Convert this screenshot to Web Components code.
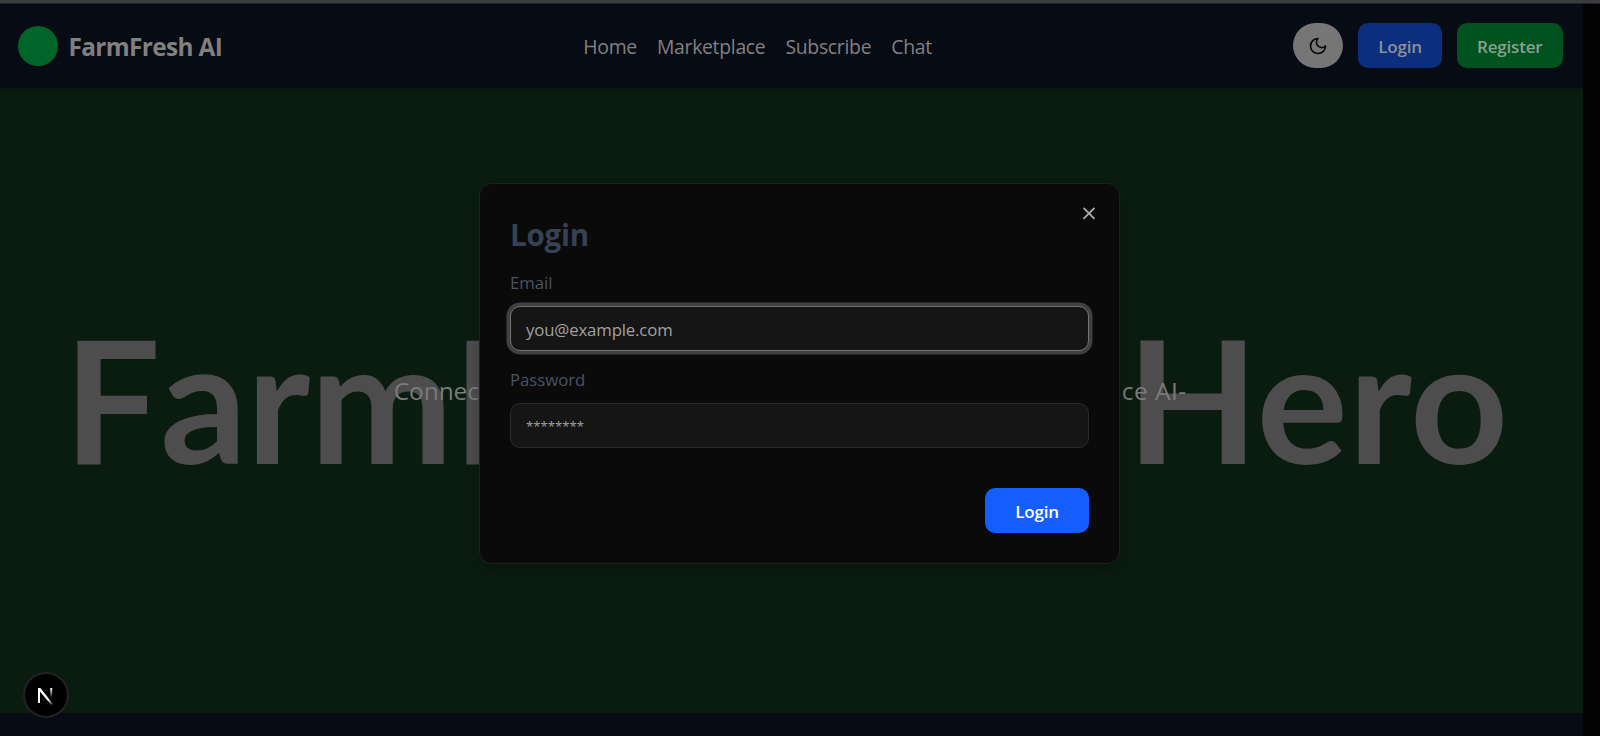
<!DOCTYPE html>
<html lang="en">
<head>
<meta charset="utf-8">
<title>FarmFresh AI</title>
<style>
html,body{margin:0;height:100%;overflow:hidden;background:#030303;font-family:"Open Sans","Noto Sans",sans-serif}
</style>
</head>
<body>
<farm-app></farm-app>
<script>
function define(name, html){
  const t=document.createElement('template');
  t.innerHTML=html;
  customElements.define(name,class extends HTMLElement{
    constructor(){super();this.attachShadow({mode:'open'}).append(t.content.cloneNode(true));}
  });
}

define('farm-button',`<style>
:host{display:flex;align-items:center;justify-content:center;box-sizing:border-box;height:45px;border-radius:10px;font-size:17px;font-weight:600;letter-spacing:-.2px;line-height:1;color:#8e9097;background:#0b2f7e}
span{padding-top:2px}
</style><span><slot></slot></span>`);

define('farm-header',`<style>
:host{display:flex;justify-content:space-between;align-items:center;box-sizing:border-box;height:85px;padding:0 20px 0 18px;background:#070b13;position:relative;box-shadow:0 2px 5px #0004}
.brand{display:flex;align-items:center;gap:10.5px;font-size:24.4px;font-weight:700;letter-spacing:-.65px;color:#808080}
.dot{width:40px;height:40px;border-radius:50%;background:#006528}
.brand span,nav{padding-top:2px}
nav{display:flex;gap:20px;font-size:19.4px;letter-spacing:-.3px;color:#808184}
.actions{display:flex;justify-content:flex-end;gap:15px}
.theme{width:50px;height:45px;border-radius:23px;background:#767676;display:flex;align-items:center;justify-content:center}
svg{width:20px;height:20px}
.l{width:84px}.r{width:105.5px;background:#00531f;color:#88a18f}
</style>
<div class="brand"><div class="dot"></div><span>FarmFresh AI</span></div>
<nav><span>Home</span><span>Marketplace</span><span>Subscribe</span><span>Chat</span></nav>
<div class="actions"><div class="theme"><svg viewBox="0 0 24 24" fill="none" stroke="#080808" stroke-width="2" stroke-linecap="round" stroke-linejoin="round"><path d="M12 3a6 6 0 0 0 9 9 9 9 0 1 1-9-9Z"/></svg></div>
<farm-button class="l">Login</farm-button><farm-button class="r">Register</farm-button></div>`);

define('farm-hero',`<style>
:host{display:grid;justify-items:center;align-items:center;height:625px;background:#0a1c0f;overflow:hidden}
h1,p{grid-area:1/1;margin:0;white-space:nowrap;display:flex;justify-content:space-between}
h1{width:1445px;margin-right:10px;font:700 171px/1 Lato,sans-serif;color:#4d4d4d;padding-bottom:7px}
.first{font-kerning:none;letter-spacing:-.4px}
.last{font-kerning:normal;letter-spacing:.5px}
p{width:793px;margin-right:2px;font-size:24.5px;letter-spacing:-.1px;line-height:32px;color:#7b7b7b;padding-bottom:20px}
.end{letter-spacing:.5px}
</style><h1><span class="first">FarmF</span><span class="last">Hero</span></h1><p><span>Connect</span><span class="end">ce AI-</span></p>`);

define('farm-field',`<style>
:host{display:block;font-size:16.8px}
label{display:block;line-height:24px;height:35px;letter-spacing:-.05px;font-weight:500;color:#485362}
.box{display:flex;align-items:center;box-sizing:border-box;height:45px;padding:1px 15px 0;border:1px solid #2a2a2a;border-radius:10px;background:#151515;color:#a1a1a1;letter-spacing:-.16px}
:host([focused]) .box{border-color:#737373;box-shadow:0 0 0 3.5px #404040}
:host([masked]) .box{font-size:13.2px;letter-spacing:0;padding:1px 15px 0}
</style><label><slot name="label"></slot></label><div class="box"><slot></slot></div>`);

define('farm-login',`<style>
:host{display:flex;flex-direction:column;box-sizing:border-box;width:641px;height:381px;padding:30px;border:1px solid #202020;border-radius:12px;background:#0a0a0a;position:relative;box-shadow:0 8px 14px #0003}
h2{margin:0;font-size:29.5px;line-height:42px;height:58px;letter-spacing:-.2px;color:#364153}
farm-field{margin-bottom:17px}
farm-button{align-self:flex-end;margin-top:23px;width:104px;background:#155dfc;color:#fff}
.x{position:absolute;right:20px;top:19px;width:20px;height:20px}
</style><h2>Login</h2>
<farm-field focused><span slot="label">Email</span>you@example.com</farm-field>
<farm-field masked><span slot="label">Password</span>********</farm-field>
<farm-button>Login</farm-button>
<svg class="x" viewBox="0 0 24 24" fill="none" stroke="#b0b0b0" stroke-width="2.1" stroke-linecap="round"><path d="M18 6.4 6 18.4M6 6.4l12 12"/></svg>`);

define('next-badge',`<style>
:host{display:grid;place-items:center;width:42px;height:42px;border-radius:50%;background:#000;border:2px solid #222}
svg{width:17px;height:18px;display:block;margin:1px 1px 0 0}
</style><svg viewBox="0 0 17 18"><defs><linearGradient id="a" x1="0" y1="0" x2="0" y2="1"><stop offset="0" stop-color="#fff"/><stop offset="1" stop-color="#fff" stop-opacity="0"/></linearGradient><linearGradient id="b" x1="0" y1="0" x2="1" y2="1"><stop offset=".65" stop-color="#fff"/><stop offset="1" stop-color="#fff" stop-opacity=".1"/></linearGradient></defs>
<path d="M1 16V1H3V16Z" fill="#fff"/><path d="M1 1H3.4L16 17 14.2 18 1.5 2.8Z" fill="url(#b)"/><path d="M13.2 1H15.2V11H13.2Z" fill="url(#a)"/></svg>`);

define('farm-app',`<style>
:host{display:block;height:736px;overflow:hidden;position:relative}
.strip{background:#3b3c40;border-bottom:1px solid #202225;box-sizing:border-box;height:4px;margin-bottom:-1px;position:relative;z-index:1}
main{width:1582.5px}
.next{height:23px;background:#070b13}
farm-login{position:absolute;left:479px;top:183px}
next-badge{position:absolute;left:23px;top:672px}
</style><div class="strip"></div><main><farm-header></farm-header><farm-hero></farm-hero><div class="next"></div></main><farm-login></farm-login><next-badge></next-badge>`);
</script>
</body>
</html>
